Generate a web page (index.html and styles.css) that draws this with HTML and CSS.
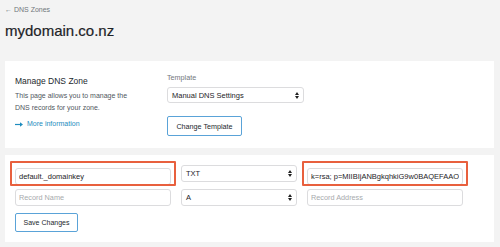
FILE: index.html
```html
<!DOCTYPE html>
<html lang="en">
<head>
  <meta charset="UTF-8">
  <meta name="viewport" content="width=device-width, initial-scale=1.0">
  <title>mydomain.co.nz - DNS Zone</title>
  <link rel="stylesheet" href="styles.css">
</head>
<body>
  <a class="back" href="#">&larr; DNS Zones</a>
  <h1>mydomain.co.nz</h1>

  <section class="card manage">
    <div class="intro">
      <h2>Manage DNS Zone</h2>
      <p>This page allows you to manage the<br>DNS records for your zone.</p>
      <a class="more" href="#">
        <svg width="8" height="5" viewBox="0 0 8 5"><path d="M0 2.5H6.2" stroke="#1e8cbe" stroke-width="1.2"/><path d="M5 0.3L8 2.5L5 4.7Z" fill="#1e8cbe"/></svg>
        More information
      </a>
    </div>
    <div class="template">
      <label>Template</label>
      <div class="select wide">
        <span>Manual DNS Settings</span>
        <svg class="arrows" width="4" height="7" viewBox="0 0 4 7"><path d="M0 3L2 0L4 3Z M0 4L2 7L4 4Z" fill="#222"/></svg>
      </div>
      <button class="btn">Change Template</button>
    </div>
  </section>

  <section class="card records">
    <div class="rows">
      <div class="mark"><input class="field" type="text" value="default._domainkey"></div>
      <div class="select">
        <span>TXT</span>
        <svg class="arrows" width="4" height="7" viewBox="0 0 4 7"><path d="M0 3L2 0L4 3Z M0 4L2 7L4 4Z" fill="#222"/></svg>
      </div>
      <div class="mark"><input class="field" type="text" value="k=rsa; p=MIIBIjANBgkqhkiG9w0BAQEFAAOCAQ8AMIIBCgKCAQEA"></div>

      <input class="field" type="text" placeholder="Record Name">
      <div class="select">
        <span>A</span>
        <svg class="arrows" width="4" height="7" viewBox="0 0 4 7"><path d="M0 3L2 0L4 3Z M0 4L2 7L4 4Z" fill="#222"/></svg>
      </div>
      <input class="field" type="text" placeholder="Record Address">
    </div>
    <button class="btn save">Save Changes</button>
  </section>
</body>
</html>
```

FILE: styles.css
```css
body {
  font-family: "Liberation Sans", Arial, sans-serif;
  background: #f3f3f3;
  color: #23282d;
  margin: 0;
  padding: 5px;
}
.back {
  display: block;
  font-size: 7px;
  line-height: 9px;
  color: #72777c;
  text-decoration: none;
}
h1 {
  font-size: 15px;
  line-height: 18px;
  font-weight: normal;
  margin: 8px 0 21px;
  color: #1d2327;
  -webkit-text-stroke: 0.2px #1d2327;
}
.card {
  background: #fff;
  width: 469px;
  padding: 10px;
}
.manage {
  display: flex;
  padding-top: 12px;
  padding-bottom: 12px;
}
.intro {
  width: 152px;
}
h2 {
  font-size: 8.5px;
  line-height: 12px;
  font-weight: normal;
  margin: 2px 0 0;
}
.intro p {
  font-size: 7px;
  line-height: 11.5px;
  color: #50575e;
  margin: 3px 0 0;
}
.more {
  display: flex;
  align-items: center;
  gap: 4px;
  margin-top: 6px;
  font-size: 7px;
  line-height: 10px;
  color: #1e8cbe;
  text-decoration: none;
}
.template {
  display: flex;
  flex-direction: column;
  align-items: flex-start;
}
.template label {
  font-size: 7.2px;
  line-height: 10px;
  color: #72777c;
  margin-bottom: 4px;
}
.select {
  box-sizing: border-box;
  height: 17px;
  display: flex;
  align-items: center;
  justify-content: space-between;
  padding: 0 4px 0 4px;
  border: 1px solid #dcdcde;
  border-radius: 3px;
  background: #fff;
  font-size: 7.5px;
  color: #1d2327;
}
.select.wide {
  width: 137px;
  height: 16px;
}
.btn {
  font-family: inherit;
  background: #fff;
  border: 1px solid #5aa3d8;
  border-radius: 2px;
  color: #23282d;
  cursor: pointer;
}
.template .btn {
  margin-top: 13px;
  width: 75px;
  height: 20px;
  font-size: 7.2px;
  padding: 0;
}
.records {
  margin-top: 7px;
  padding-top: 10px;
}
.rows {
  display: grid;
  grid-template-columns: 156px 116px 156px;
  grid-auto-rows: 17px;
  column-gap: 10px;
  row-gap: 7px;
}
.mark {
  position: relative;
}
.mark::after {
  content: "";
  position: absolute;
  inset: -4px -5px;
  border: 2px solid #e8603e;
  border-radius: 1px;
  pointer-events: none;
}
.field {
  box-sizing: border-box;
  width: 100%;
  height: 17px;
  margin: 0;
  padding: 0 3px;
  border: 1px solid #dcdcde;
  border-radius: 3px;
  font-family: inherit;
  font-size: 7.5px;
  color: #1d2327;
  outline: none;
}
.field::placeholder {
  color: #a7aaad;
  font-size: 7.3px;
}
.save {
  margin-top: 7px;
  width: 63px;
  height: 19px;
  font-size: 7px;
  padding: 0;
  display: block;
}
```
